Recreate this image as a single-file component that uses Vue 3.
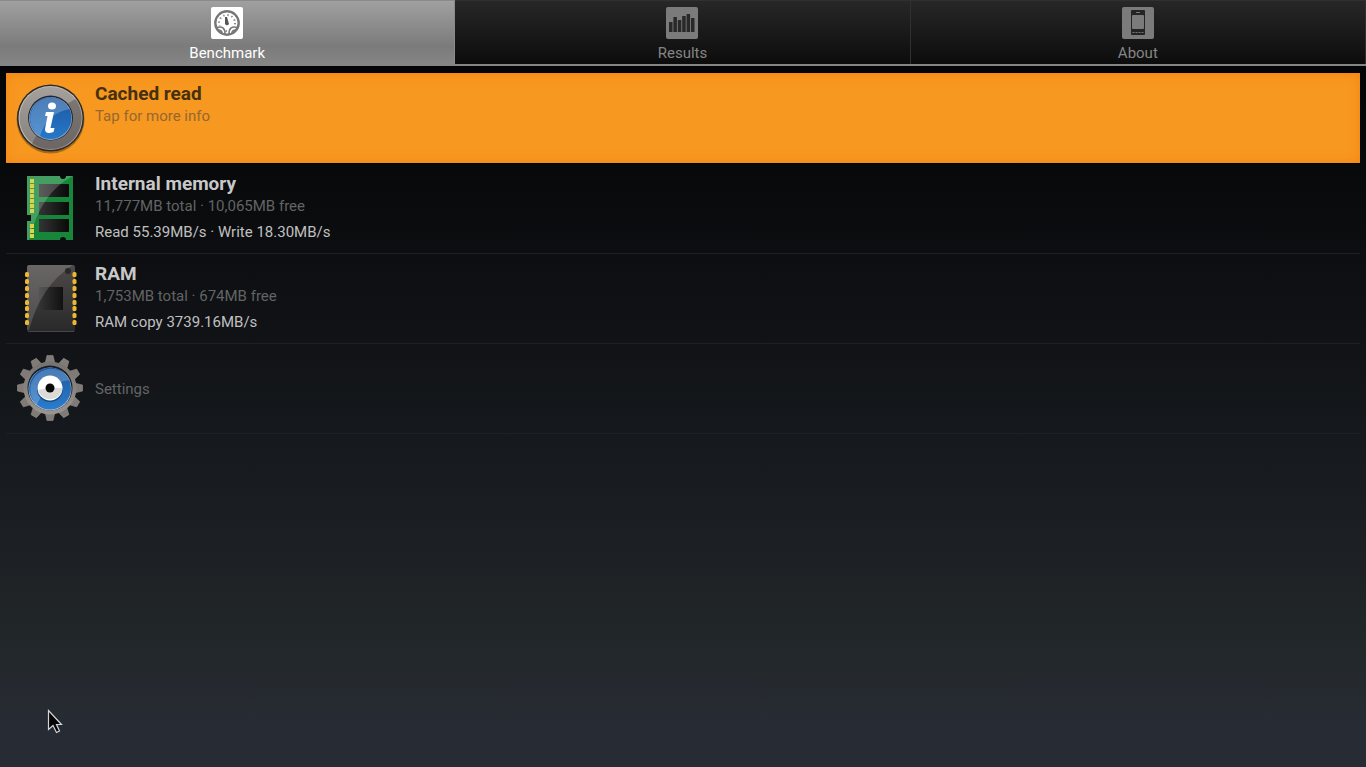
<template>
  <div class="app">
    <nav class="tabs">
      <button
        v-for="tab in tabs"
        :key="tab.id"
        type="button"
        class="tab"
        :class="{ active: tab.id === activeTab }"
        @click="activeTab = tab.id"
      >
        <svg v-if="tab.id === 'benchmark'" class="tab-icon" viewBox="0 0 32 32">
          <rect x="0" y="0" width="32" height="32" rx="2" fill="#fff" />
          <circle cx="16" cy="16" r="8" fill="none" stroke="#888" stroke-width="2" stroke-dasharray="1.4 2.8" />
          <path d="M5 19 Q14 17 14.5 27 L17.5 27 Q18 17 27 19 L25 24 L18 28 H14 L7 24 Z" fill="#fff" />
          <path d="M5.5 20.5 Q14 18 14 27 M26.5 20.5 Q18 18 18 27 M7 23 Q11 23 11 26 M25 23 Q21 23 21 26" fill="none" stroke="#777" stroke-width="1.6" />
          <circle cx="16" cy="16" r="11.7" fill="none" stroke="#777" stroke-width="2.4" />
          <path d="M14 10 L16 10 L18 17 Q16 19.5 14 17 Z" fill="#555" />
        </svg>
        <svg v-else-if="tab.id === 'results'" class="tab-icon" viewBox="0 0 32 32">
          <rect x="0" y="0" width="32" height="32" rx="2" fill="#7b7b7b" />
          <path d="M3 15h3.5v10H3z M7.4 10h3.5v15H7.4z M11.8 13h3.5v12h-3.5z M16.2 9h3.5v16h-3.5z M20.600 7h3.5v18h-3.5z M25 11h3.5v14H25z" fill="#292929" />
        </svg>
        <svg v-else class="tab-icon" viewBox="0 0 32 32">
          <rect x="0" y="0" width="32" height="32" rx="2" fill="#7b7b7b" />
          <rect x="9" y="3" width="14" height="25" rx="1" fill="#242424" />
          <rect x="10" y="8" width="12" height="14" rx="1" fill="#7b7b7b" />
          <path d="M14 5.5h4 M10.5 25.5h2 M13.5 25.5h2 M16.500 25.5h2 M19.5 25.5h2" stroke="#777" stroke-width="1" />
        </svg>
        <span>{{ tab.label }}</span>
      </button>
    </nav>

    <main class="list">
      <button
        v-for="row in rows"
        :key="row.id"
        type="button"
        class="row"
        :class="{ selected: row.id === 'cached', centered: !row.title }"
      >
        <svg v-if="row.id === 'cached'" class="row-icon" viewBox="0 0 72 72">
          <defs>
            <linearGradient id="ring" x1="0" y1="0" x2="0" y2="1">
              <stop offset="0" stop-color="#a5a09c" />
              <stop offset="1" stop-color="#85807c" />
            </linearGradient>
            <linearGradient id="blue" x1="0" y1="0" x2="0" y2="1">
              <stop offset="0" stop-color="#1c58a0" />
              <stop offset="1" stop-color="#2678c8" />
            </linearGradient>
            <clipPath id="infoClip"><circle cx="36" cy="36" r="32" /></clipPath>
          </defs>
          <circle cx="36.5" cy="37.5" r="34" fill="#000" opacity=".3" />
          <circle cx="36.5" cy="36" r="33.5" fill="#2e2a27" />
          <circle cx="36.5" cy="36" r="32" fill="#c1beba" />
          <circle cx="36.5" cy="36" r="31" fill="url(#ring)" />
          <path d="M16 66 Q31 30 68 14 V72 H16 Z" fill="#45413f" opacity=".4" clip-path="url(#infoClip)" />
          <circle cx="36.5" cy="36" r="22.5" fill="#24252b" />
          <circle cx="36.5" cy="36.5" r="21.5" fill="#99aecb" />
          <circle cx="36.5" cy="36" r="21" fill="url(#blue)" />
          <path d="M26 54 Q33 31 56 27 A21 21 0 1 0 26 54" fill="#fff" opacity=".22" />
          <ellipse cx="38" cy="24" rx="4" ry="3.5" fill="#fff" />
          <path d="M32 30 H40 L36.5 46 H40.5 L39.5 50 Q31 53 31 47 L33.5 34 H31 Z" fill="#fff" />
        </svg>

        <svg v-else-if="row.id === 'internal'" class="row-icon" viewBox="0 0 72 72">
          <defs>
            <linearGradient id="module" x1="0" y1="0" x2="1" y2="0">
              <stop offset="0" stop-color="#343434" />
              <stop offset="1" stop-color="#090909" />
            </linearGradient>
            <clipPath id="boardClip"><path d="M13 4 H46 Q46 7 49 7 Q52 7 52 4 H59 V68 H52 Q52 65 49 65 Q46 65 46 68 H13 V49 H17 V43 H13 Z" /></clipPath>
          </defs>
          <g clip-path="url(#boardClip)">
            <rect x="13" y="4" width="46" height="64" fill="#17863a" />
            <rect x="25" y="12" width="30" height="13" fill="url(#module)" />
            <rect x="25" y="30" width="30" height="13" fill="url(#module)" />
            <rect x="25" y="47" width="30" height="13" fill="url(#module)" />
            <path d="M13 4 H59 Q27 20 15 68 H13 Z" fill="#fff" opacity=".2" />
            <rect v-for="y in boardPins" :key="y" x="16" :y="y" width="4" height="4" fill="#d9d548" />
          </g>
        </svg>

        <svg v-else-if="row.id === 'ram'" class="row-icon" viewBox="0 0 72 72">
          <defs>
            <linearGradient id="chip" x1="0" y1="0" x2="0" y2="1">
              <stop offset="0" stop-color="#4d4948" />
              <stop offset="1" stop-color="#292929" />
            </linearGradient>
            <linearGradient id="core" x1="0" y1="0" x2="1" y2="0">
              <stop offset="0" stop-color="#353434" />
              <stop offset="1" stop-color="#111" />
            </linearGradient>
          </defs>
          <rect x="13" y="3" width="48" height="67" rx="2" fill="url(#chip)" />
          <rect x="25" y="25" width="24" height="23" fill="url(#core)" />
          <path d="M13 5 Q13 3 15 3 H59 Q27 23 15 68 L13 68 Z" fill="#fff" opacity=".16" />
          <circle cx="54" cy="9" r="3" fill="#292828" />
          <path d="M14 69.5 H60" stroke="#474747" />
          <g v-for="y in chipPins" :key="y" fill="#efb832">
            <rect x="11" :y="y" width="4" height="5" rx="1.5" />
            <rect x="58.5" :y="y" width="4" height="5" rx="1.5" />
          </g>
        </svg>

        <svg v-else class="row-icon" viewBox="0 0 72 72">
          <defs>
            <linearGradient id="gear" x1="0" y1="0" x2="0" y2="72" gradientUnits="userSpaceOnUse">
              <stop offset="0" stop-color="#6f6b68" />
              <stop offset="1" stop-color="#a19c98" />
            </linearGradient>
            <linearGradient id="disc" x1="0" y1="0" x2="0" y2="1">
              <stop offset="0" stop-color="#1c58a0" />
              <stop offset="1" stop-color="#2b7dcc" />
            </linearGradient>
          </defs>
          <path
            v-for="n in 12"
            :key="n"
            d="M31 12 L33 3.500 H39 L41 12 Z"
            fill="#807b77"
            stroke="#938d88"
            stroke-width=".6"
            :transform="`rotate(${n * 30} 36 36)`"
          />
          <circle cx="36" cy="36" r="26.5" fill="url(#gear)" />
          <circle cx="36" cy="36" r="22.5" fill="#191e26" />
          <circle cx="36" cy="37" r="21.5" fill="#b4c3d5" />
          <circle cx="36" cy="36.5" r="21" fill="url(#disc)" />
          <path d="M23 53 Q31 31 56 28 A21 21 0 1 0 23 53" fill="#fff" opacity=".2" />
          <circle cx="36" cy="37" r="13" fill="#174d87" />
          <circle cx="36" cy="36" r="12.5" fill="#fff" />
          <path d="M24 38 Q36 35 48.5 36 A12.5 12.5 0 0 1 24 38" fill="#dcdad9" />
          <circle cx="36" cy="36" r="4.5" fill="#090909" />
        </svg>

        <span class="row-text">
          <span v-if="row.title" class="title">{{ row.title }}</span>
          <span class="detail">{{ row.detail }}</span>
          <span v-if="row.result" class="result">{{ row.result }}</span>
        </span>
      </button>
    </main>

    <svg class="pointer" viewBox="0 0 16 26">
      <path d="M1.5 1.5 V20.5 L6 16.5 L9.5 23.5 L12.5 22 L9.5 15.5 H14.5 Z" fill="#050505" stroke="#d5d5d7" stroke-width="1.2" />
    </svg>
  </div>
</template>

<script setup>
import { ref } from 'vue';

const activeTab = ref('benchmark');

const tabs = [
  { id: 'benchmark', label: 'Benchmark' },
  { id: 'results', label: 'Results' },
  { id: 'about', label: 'About' }
];

const rows = [
  { id: 'cached', title: 'Cached read', detail: 'Tap for more info' },
  { id: 'internal', title: 'Internal memory', detail: '11,777MB total · 10,065MB free', result: 'Read 55.39MB/s · Write 18.30MB/s' },
  { id: 'ram', title: 'RAM', detail: '1,753MB total · 674MB free', result: 'RAM copy 3739.16MB/s' },
  { id: 'settings', detail: 'Settings' }
];

// contact positions, the board has a notch between the two groups
const boardPins = [7, 12, 17, 22, 27, 32, 37, 52, 57, 62];
const chipPins = [10, 17, 24, 31, 38, 44, 51, 58];
</script>

<style>
body {
  margin: 0;
  background: #272b33;
}
</style>

<style scoped>
.app {
  position: relative;
  min-height: 100vh;
  background: linear-gradient(#010202 0%, #08090b 22%, #16191d 58%, #22272a 84%, #272b33 94%, #272b33 100%);
  font-family: Roboto, "Liberation Sans", sans-serif;
}

button {
  margin: 0;
  border: 0;
  font-family: inherit;
  cursor: default;
}

.tabs {
  display: flex;
  background: #000;
  border-bottom: 2px solid #858585;
}

.tab {
  flex: 1;
  display: flex;
  flex-direction: column;
  align-items: center;
  gap: 4px;
  height: 64px;
  padding: 6px 0 0;
  border-right: 1px solid #303030;
  border-top: 1px solid #303030;
  background: linear-gradient(#272727, #1b1b1b 45%, #0c0c0c);
  color: #858585;
  font-size: 15px;
  line-height: 20px;
}

.tab.active {
  border-color: #8a8a8a;
  background: linear-gradient(#a0a0a0, #7b7b7b 72%, #858585);
  color: #fff;
}

.tab-icon {
  flex: none;
  width: 32px;
  height: 32px;
}

.list {
  margin: 7px 6px 0;
  border-bottom: 1px solid #1b2023;
}

.row {
  display: flex;
  align-items: flex-start;
  gap: 9px;
  box-sizing: border-box;
  width: 100%;
  height: 90px;
  padding: 8px;
  border-top: 1px solid #1b2023;
  background: none;
  text-align: left;
}

.row.selected {
  border-top-color: #f58a18;
  background: #f79820;
  box-shadow: inset 0 0 12px #f58514;
}

.selected + .row {
  border-top-color: #000;
}

.row-icon {
  flex: none;
  width: 72px;
  height: 72px;
}

.row-text {
  display: flex;
  flex-direction: column;
}

.centered .row-text {
  align-self: center;
}

.title {
  color: #c8c8c8;
  font-size: 19px;
  font-weight: 700;
  line-height: 24px;
}

.detail {
  color: #626465;
  font-size: 15px;
  line-height: 20px;
}

.result {
  margin-top: 6px;
  color: #c0c0c0;
  font-size: 15px;
  line-height: 20px;
}

.selected .title {
  color: #45300f;
}

.selected .detail {
  color: #966730;
}

/* mouse pointer floats over the screen */
.pointer {
  position: absolute;
  left: 47px;
  bottom: 32px;
  width: 16px;
  height: 26px;
}
</style>
